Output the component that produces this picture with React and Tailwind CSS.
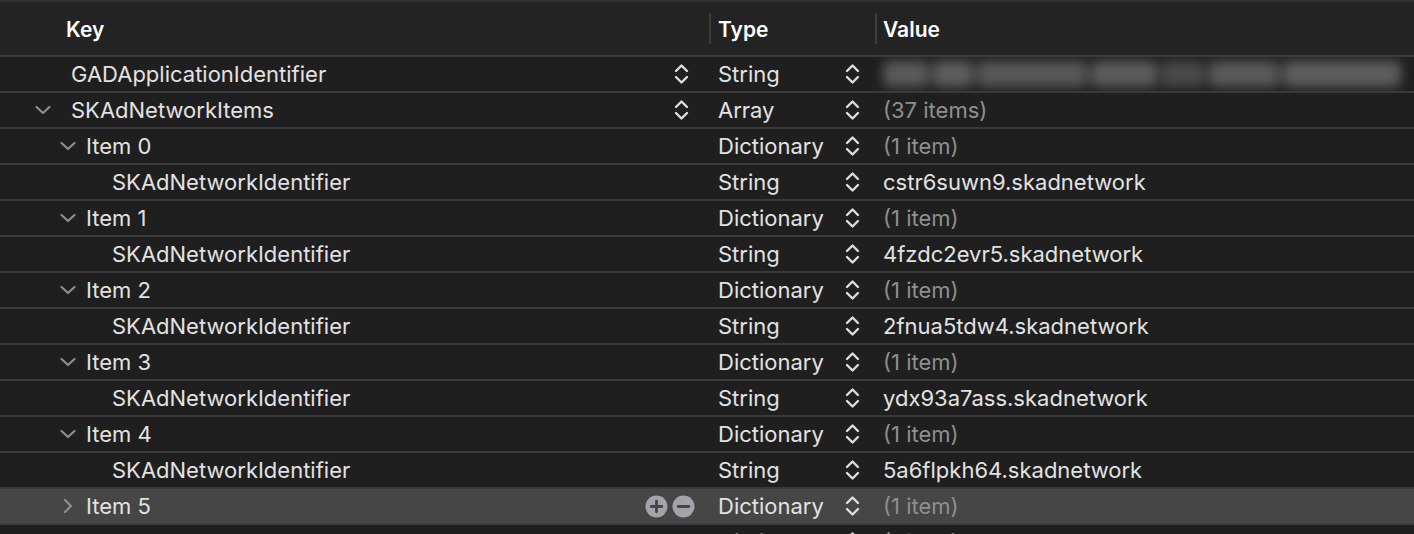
import React from "react";

const rows = [
  { key: "GADApplicationIdentifier", pad: "pl-[71px]", type: "String", value: null, keyStepper: true },
  { key: "SKAdNetworkItems", pad: "pl-[71px]", chevron: "down", chevPad: "left-[34px]", type: "Array", value: "(37 items)", muted: true, keyStepper: true },
  { key: "Item 0", pad: "pl-[86px]", chevron: "down", chevPad: "left-[59px]", type: "Dictionary", value: "(1 item)", muted: true },
  { key: "SKAdNetworkIdentifier", pad: "pl-[112px]", type: "String", value: "cstr6suwn9.skadnetwork" },
  { key: "Item 1", pad: "pl-[86px]", chevron: "down", chevPad: "left-[59px]", type: "Dictionary", value: "(1 item)", muted: true },
  { key: "SKAdNetworkIdentifier", pad: "pl-[112px]", type: "String", value: "4fzdc2evr5.skadnetwork" },
  { key: "Item 2", pad: "pl-[86px]", chevron: "down", chevPad: "left-[59px]", type: "Dictionary", value: "(1 item)", muted: true },
  { key: "SKAdNetworkIdentifier", pad: "pl-[112px]", type: "String", value: "2fnua5tdw4.skadnetwork" },
  { key: "Item 3", pad: "pl-[86px]", chevron: "down", chevPad: "left-[59px]", type: "Dictionary", value: "(1 item)", muted: true },
  { key: "SKAdNetworkIdentifier", pad: "pl-[112px]", type: "String", value: "ydx93a7ass.skadnetwork" },
  { key: "Item 4", pad: "pl-[86px]", chevron: "down", chevPad: "left-[59px]", type: "Dictionary", value: "(1 item)", muted: true },
  { key: "SKAdNetworkIdentifier", pad: "pl-[112px]", type: "String", value: "5a6flpkh64.skadnetwork" },
  { key: "Item 5", pad: "pl-[86px]", chevron: "right", chevPad: "left-[62px]", type: "Dictionary", value: "(1 item)", muted: true, selected: true },
  { key: "Item 6", pad: "pl-[86px]", chevron: "right", chevPad: "left-[62px]", type: "Dictionary", value: "(1 item)", muted: true },
];

function Stepper() {
  return (
    <svg width="17" height="26" viewBox="0 0 17 26" fill="none" stroke="#dedede" strokeWidth="2.4" strokeLinecap="round" strokeLinejoin="round">
      <path d="M3 10 L8.5 4.5 L14 10" />
      <path d="M3 16 L8.5 21.5 L14 16" />
    </svg>
  );
}

function Chevron({ dir }) {
  if (dir === "right") {
    return (
      <svg width="12" height="18" viewBox="0 0 12 18" fill="none" stroke="#8e8e8e" strokeWidth="2.2" strokeLinecap="round" strokeLinejoin="round">
        <path d="M3 3 L9 9 L3 15" />
      </svg>
    );
  }
  return (
    <svg width="18" height="12" viewBox="0 0 18 12" fill="none" stroke="#8e8e8e" strokeWidth="2.2" strokeLinecap="round" strokeLinejoin="round">
      <path d="M2.5 3 L9 9 L15.5 3" />
    </svg>
  );
}

function RoundButton({ plus }) {
  return (
    <svg width="23" height="23" viewBox="0 0 24 24">
      <circle cx="12" cy="12" r="11.5" fill="#a3a3a9" />
      <path d={plus ? "M6.5 12 H17.5 M12 6.5 V17.5" : "M6.5 12 H17.5"} stroke="#454545" strokeWidth="3" strokeLinecap="round" />
    </svg>
  );
}

// the value of this row is blurred in the screenshot
function BlurredValue() {
  return (
    <div className="flex items-center gap-[4px] h-full w-[522px] blur-[6px]">
      <div className="w-[46px] h-[26px] rounded-md bg-[#5a5a5a]" />
      <div className="w-[40px] h-[26px] rounded-md bg-[#5e5e5e]" />
      <div className="w-[110px] h-[26px] rounded-md bg-[#585858]" />
      <div className="w-[66px] h-[26px] rounded-md bg-[#5c5c5c]" />
      <div className="w-[44px] h-[26px] rounded-md bg-[#4a4a4a]" />
      <div className="w-[70px] h-[26px] rounded-md bg-[#5a5a5a]" />
      <div className="w-[118px] h-[26px] rounded-md bg-[#5e5e5e]" />
    </div>
  );
}

export default function App() {
  return (
    <div
      className="w-[1414px] h-[534px] overflow-hidden bg-[#1f1f1f] text-[#e2e2e2] text-[22px]"
      style={{ fontFamily: "Inter, 'Noto Sans', sans-serif" }}
    >
      {/* Header */}
      <div className="h-[57px] border-t-2 border-t-[#2f2f2f] border-b-2 border-b-[#3a3a3a] bg-[#232323] flex items-center font-semibold text-white text-[21px]">
        <div className="w-[709px] pl-[66px] pt-[2px]">Key</div>
        <div className="w-[166px] h-[31px] border-l-2 border-[#3c3c3c] pl-[7px] flex items-center pt-[2px]">Type</div>
        <div className="flex-1 h-[31px] border-l-2 border-[#3c3c3c] pl-[6px] flex items-center pt-[2px]">Value</div>
      </div>

      {/* Rows */}
      {rows.map((r, i) => (
        <div
          key={i}
          className={`h-[36px] border-b-2 border-[#3a3a3a] flex items-center ${r.selected ? "bg-[#464646]" : ""}`}
        >
          <div className={`relative w-[709px] h-full flex items-center ${r.pad}`}>
            {r.chevron && (
              <span className={`absolute ${r.chevPad} top-0 h-full flex items-center`}>
                <Chevron dir={r.chevron} />
              </span>
            )}
            <span className="flex-1 leading-none -mt-[1px]">{r.key}</span>
            {r.keyStepper && (
              <span className="mr-[19px] flex items-center">
                <Stepper />
              </span>
            )}
            {r.selected && (
              <span className="mr-[14px] flex items-center gap-[4px]">
                <RoundButton plus />
                <RoundButton />
              </span>
            )}
          </div>
          <div className="w-[166px] h-full flex items-center pl-[9px]">
            <span className="flex-1 leading-none -mt-[1px]">{r.type}</span>
            <span className="mr-[14px] flex items-center">
              <Stepper />
            </span>
          </div>
          <div className="flex-1 h-full flex items-center pl-[8px] overflow-hidden">
            {r.value === null ? (
              <BlurredValue />
            ) : (
              <span className={`leading-none -mt-[1px] ${r.muted ? "text-[#8f8f8f]" : ""}`}>{r.value}</span>
            )}
          </div>
        </div>
      ))}
    </div>
  );
}
